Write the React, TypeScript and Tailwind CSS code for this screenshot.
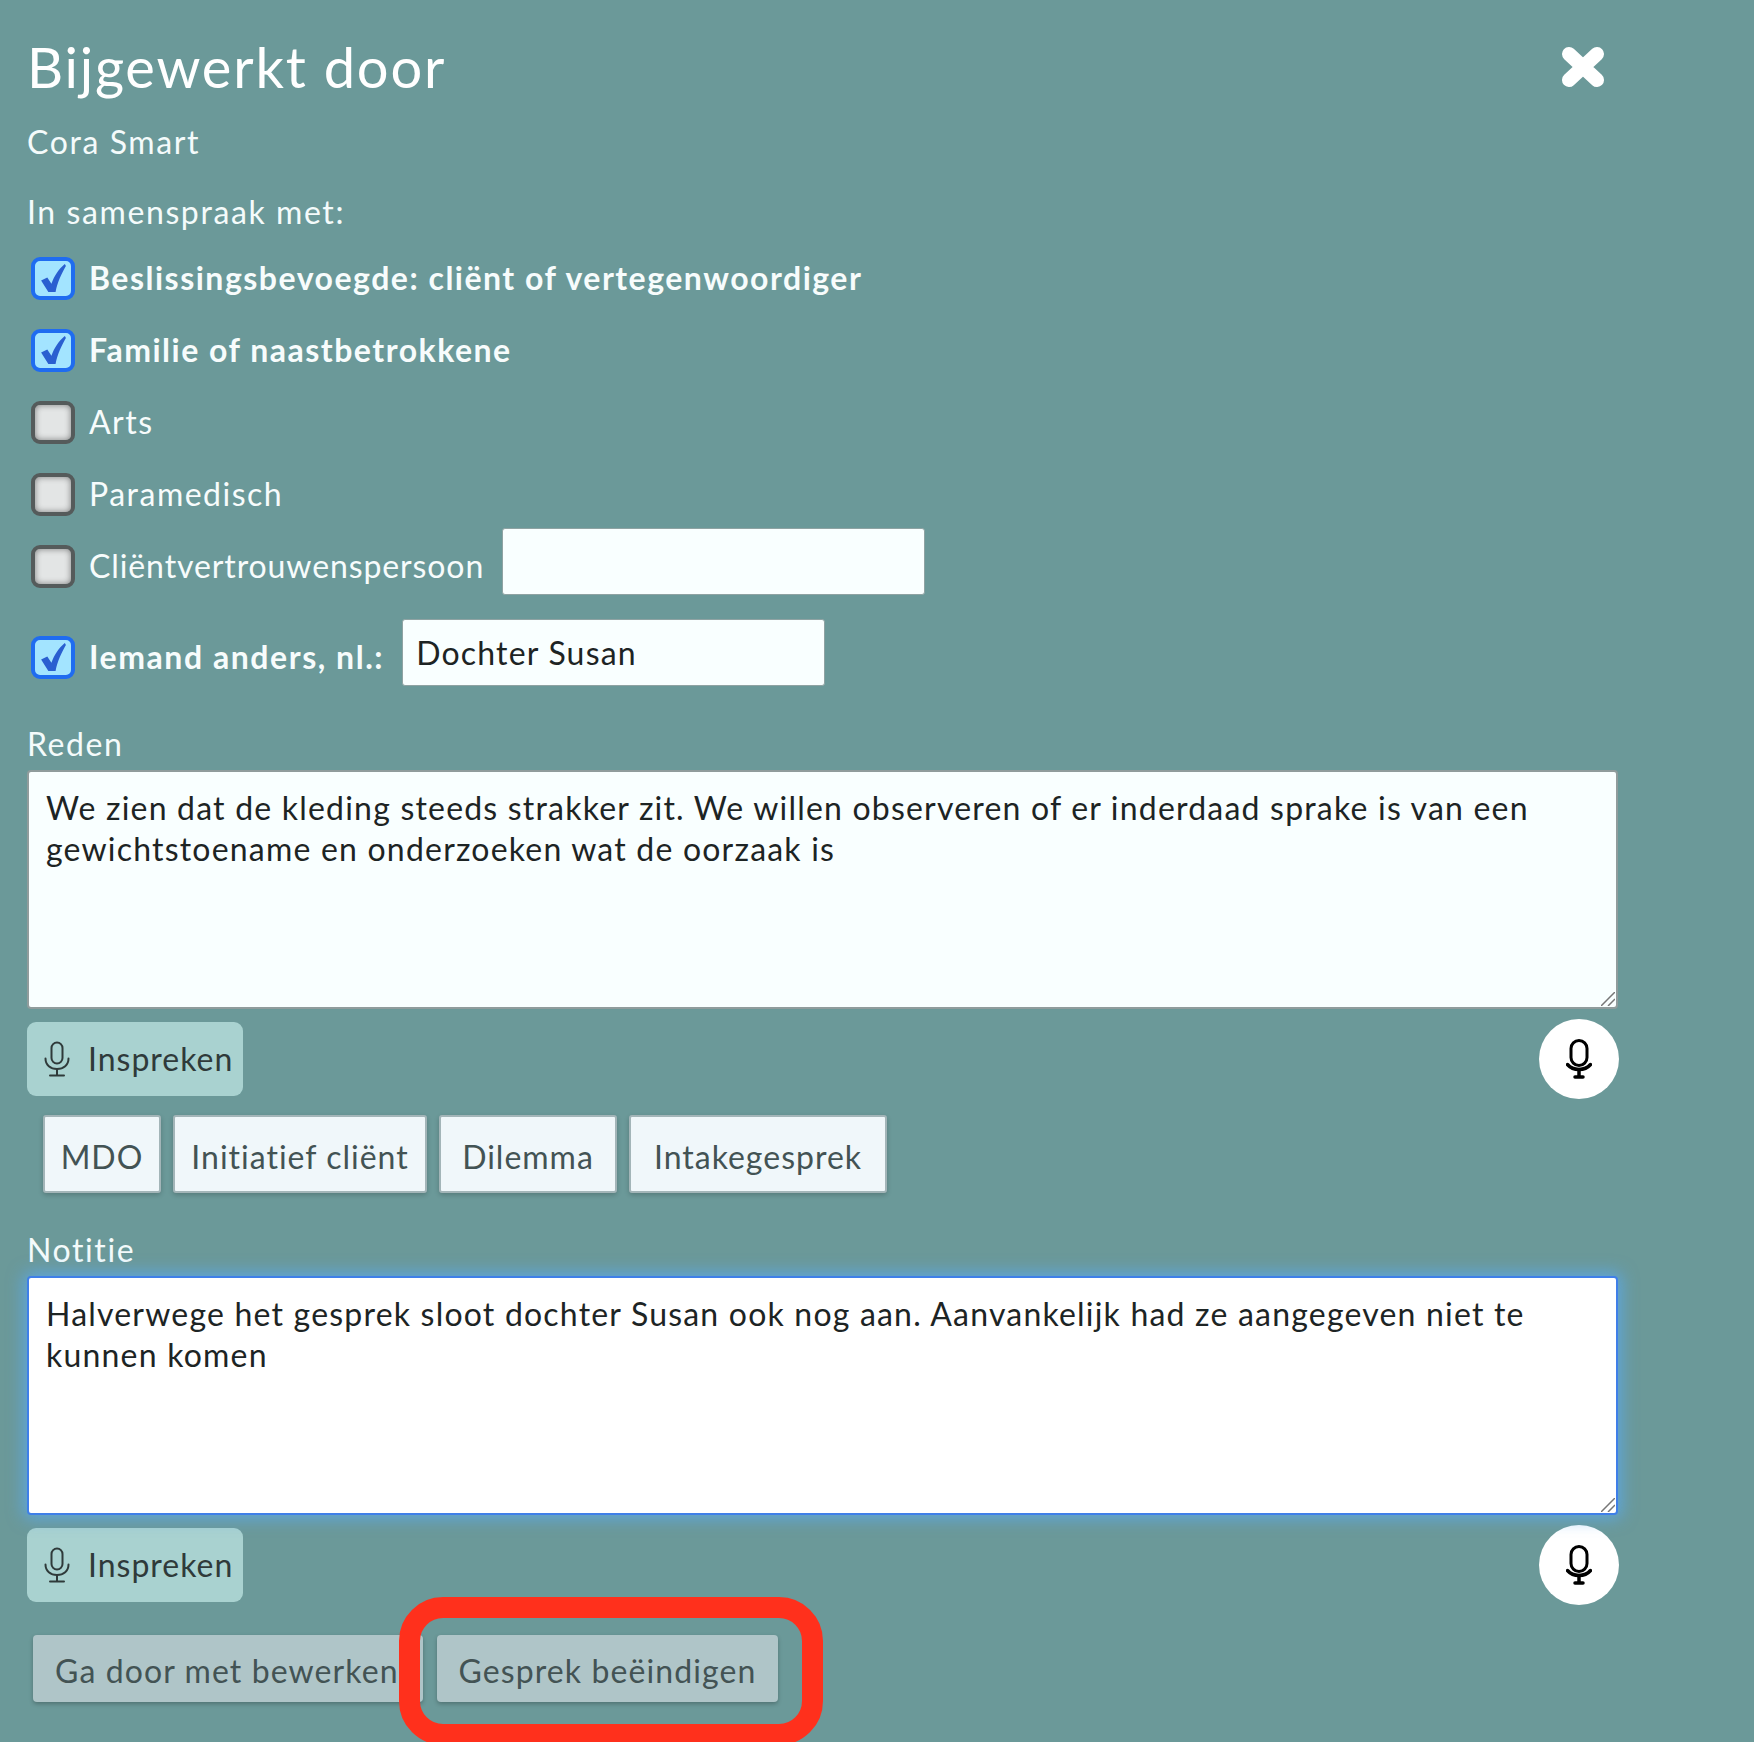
const bodyFont = "font-['Lato','Noto_Sans',sans-serif]";

const labelClass = "text-[32px] leading-[40px] tracking-[1.6px] text-[#f4fbfb]";

const MicIcon = ({ className, strokeWidth }: { className: string; strokeWidth: number }) => (
  <svg viewBox="0 0 26 36" className={className} fill="none" stroke="currentColor" strokeWidth={strokeWidth} strokeLinecap="round">
    <rect x="7.5" y="1.5" width="11" height="21" rx="5.5" />
    <path d="M1.5 17.5c0 6.500 5 10.500 11.500 10.500s11.500-4 11.500-10.500" />
    <path d="M13 28v6.500M6 34.500h14" />
  </svg>
);

const RoundMicIcon = () => (
  <svg viewBox="0 0 26 40" className="h-[40px] w-[26px] text-black" fill="none" stroke="currentColor" strokeWidth="3" strokeLinecap="round">
    <rect x="5" y="1.500" width="16" height="25" rx="8" />
    <path d="M1.500 25.500c3 3.500 7 5 11.500 5s8.500-1.500 11.500-5" strokeWidth="3.500" />
    <path d="M13 30.500v7M9 38h8" strokeWidth="3.500" />
  </svg>
);

const Checkbox = ({ checked }: { checked: boolean }) =>
  checked ? (
    <span className="flex h-[43px] w-[44px] shrink-0 items-center justify-center rounded-[9px] border-[4px] border-[#1f6cf0] bg-[#a3e4ff] blur-[0.6px]">
      <svg viewBox="0 0 26 30" className="h-[31px] w-[27px]">
        <path d="M1 17l6-3 4 6C14 12 18 6 24 1l1 2c-4 7-8 15-10 25H8z" fill="#2a5fd0" />
      </svg>
    </span>
  ) : (
    <span className="h-[43px] w-[44px] shrink-0 rounded-[9px] border-[4px] border-[#555b5b] bg-[#e3e5e5] shadow-[inset_0_0_6px_rgba(0,0,0,0.45)] blur-[0.6px]" />
  );

const CheckRow = ({ label, checked }: { label: string; checked?: boolean }) => (
  <div className="flex h-[72px] items-center gap-[14px] pl-[4px]">
    <Checkbox checked={!!checked} />
    <span className={`text-[32px] leading-[40px] tracking-[1.5px] text-[#f7fcfc] ${checked ? "font-bold" : ""}`}>{label}</span>
  </div>
);

const SpeakRow = () => (
  <div className="flex items-center justify-between">
    <button type="button" className="flex h-[74px] w-[216px] items-center gap-[18px] rounded-[9px] bg-[#a9d2d0] pl-[17px] text-[32px] tracking-[1px] text-[#2f3a3a]">
      <MicIcon className="h-[36px] w-[26px]" strokeWidth={2} />
      Inspreken
    </button>
    <button type="button" className="-mr-px flex h-[80px] w-[80px] items-center justify-center rounded-full bg-white">
      <RoundMicIcon />
    </button>
  </div>
);

const NoteField = ({ value, className }: { value: string; className: string }) => (
  <div className="relative mt-[6px]">
    <textarea
      readOnly
      className={`block h-[239px] w-full resize-none rounded-[4px] px-[17px] pb-[15px] pt-[15px] text-[32px] leading-[41px] tracking-[1.2px] text-[#1d2424] outline-none ${className}`}
      defaultValue={value}
    />
    {/* resize grip, larger than the browser's own */}
    <svg viewBox="0 0 14 14" className="absolute bottom-[3px] right-[3px] h-[14px] w-[14px]" stroke="#777" strokeWidth="1.500">
      <path d="M0 14L14 0M7 14l7-7" />
    </svg>
  </div>
);

const chips = [
  { label: "MDO", width: "w-[118px]" },
  { label: "Initiatief cliënt", width: "w-[254px]" },
  { label: "Dilemma", width: "w-[178px]" },
  { label: "Intakegesprek", width: "w-[258px]" },
];

const inputClass = "ml-[18px] -mt-[10px] h-[67px] w-[423px] rounded-[3px] border border-[#8fa3a3] bg-[#f9ffff] px-[13px] text-[32px] tracking-[1.2px] text-[#1d2424]";

export default function App() {
  return (
    <div className={`relative h-[1742px] w-[1754px] overflow-hidden bg-[#6b9999] ${bodyFont}`}>
      <div className="w-[1618px] pl-[27px]">
        <div className="flex h-[120px] items-center justify-between pt-[14px]">
          <h1 className="text-[56px] font-normal leading-[64px] tracking-[1.8px] text-white">Bijgewerkt door</h1>
          <svg viewBox="0 0 42 40" className="mr-[14px] h-[40px] w-[42px]" stroke="white" strokeWidth="14" strokeLinecap="round">
            <path d="M7 7l28 26M35 7L7 33" />
          </svg>
        </div>
        <p className={`${labelClass} mt-[2px]`}>Cora Smart</p>
        <p className={`${labelClass} mt-[30px]`}>In samenspraak met:</p>

        <div className="mt-[10px]">
          <CheckRow label="Beslissingsbevoegde: cliënt of vertegenwoordiger" checked />
          <CheckRow label="Familie of naastbetrokkene" checked />
          <CheckRow label="Arts" />
          <CheckRow label="Paramedisch" />
          <div className="flex h-[72px] items-center pl-[4px]">
            <Checkbox checked={false} />
            <span className="ml-[14px] text-[32px] tracking-[0.9px] text-[#f7fcfc]">Cliëntvertrouwenspersoon</span>
            <input readOnly className={inputClass} />
          </div>
          <div className="mt-[19px] flex h-[72px] items-center pl-[4px]">
            <Checkbox checked />
            <span className="ml-[14px] text-[32px] font-bold tracking-[1.55px] text-[#f7fcfc]">Iemand anders, nl.:</span>
            <input readOnly defaultValue="Dochter Susan" className={inputClass} />
          </div>
        </div>

        <p className={`${labelClass} mt-[31px]`}>Reden</p>
        <NoteField
          className="border-2 border-[#909c9c] bg-[#f9ffff]"
          value="We zien dat de kleding steeds strakker zit. We willen observeren of er inderdaad sprake is van een gewichtstoename en onderzoeken wat de oorzaak is"
        />
        <div className="mt-[10px]">
          <SpeakRow />
        </div>

        <div className="mt-[16px] flex gap-[12px] pl-[16px]">
          {chips.map((chip) => (
            <button
              key={chip.label}
              type="button"
              className={`h-[78px] ${chip.width} rounded-[3px] border-2 border-[#a3b5b8] bg-[#f0f7fa] pt-[6px] text-[32px] tracking-[1px] text-[#435354] shadow-[0_2px_5px_rgba(0,0,0,0.2)]`}
            >
              {chip.label}
            </button>
          ))}
        </div>

        <p className={`${labelClass} mt-[37px]`}>Notitie</p>
        <NoteField
          className="border-2 border-[#3f7fe8] bg-white shadow-[0_0_16px_4px_rgba(90,170,240,0.75)]"
          value="Halverwege het gesprek sloot dochter Susan ook nog aan. Aanvankelijk had ze aangegeven niet te kunnen komen"
        />
        <div className="mt-[10px]">
          <SpeakRow />
        </div>

        <div className="mt-[30px] flex gap-[14px] pl-[6px]">
          <button type="button" className="h-[67px] w-[390px] rounded-[4px] bg-[#afc5c8] pl-[22px] pt-[4px] text-left text-[32px] tracking-[1.1px] text-[#435354] shadow-[0_2px_4px_rgba(0,0,0,0.25)]">
            Ga door met bewerken
          </button>
          <button type="button" className="h-[67px] w-[341px] rounded-[4px] bg-[#afc5c8] pt-[4px] text-[32px] tracking-[1.1px] text-[#435354] shadow-[0_2px_4px_rgba(0,0,0,0.25)]">
            Gesprek beëindigen
          </button>
        </div>
      </div>

      {/* red annotation on top of the screenshot */}
      <div className="absolute left-[399px] top-[1597px] h-[148px] w-[424px] rounded-[44px] border-[21px] border-[#ff301c]" />
    </div>
  );
}
